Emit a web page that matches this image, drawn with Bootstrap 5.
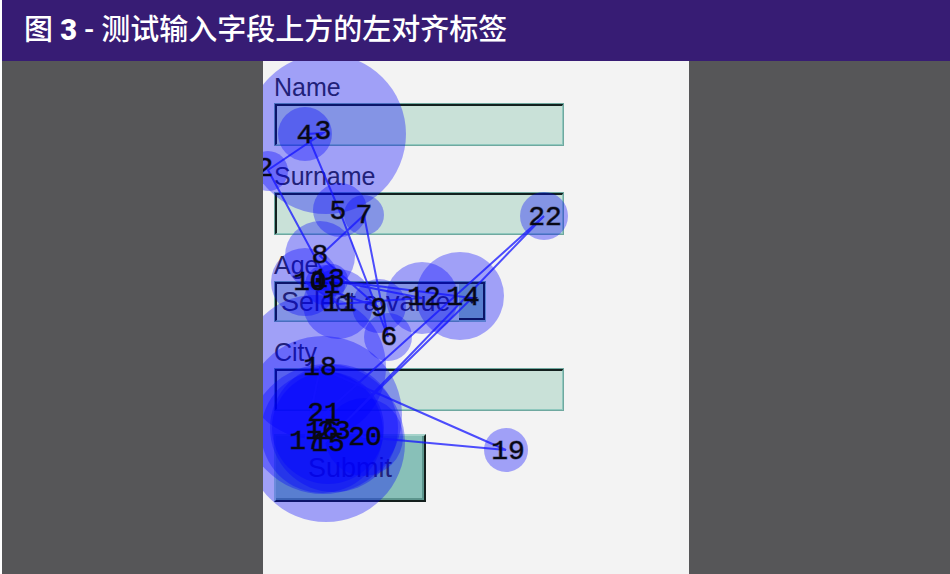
<!DOCTYPE html>
<html lang="zh-CN">
<head>
<meta charset="utf-8">
<meta name="viewport" content="width=device-width, initial-scale=1">
<title>图 3 - 测试输入字段上方的左对齐标签</title>
<link rel="stylesheet" href="https://cdn.jsdelivr.net/npm/bootstrap@5.3.0/dist/css/bootstrap.min.css">
<style>
  body { background: #fff; padding-left: 2px; }
  .figure-title { background: #371c74; color: #fff; padding: 9px 22px 10px; font: 500 29px/42px Roboto, "Noto Sans CJK SC", sans-serif; }
  .figure-title b { font-weight: 900; }
  .stage { background: #565658; }
  .sheet { width: 426px; background: #f3f3f3; padding: 12px 11px; font-family: "Liberation Sans", Arial, sans-serif; color: #333; }
  .field-label { font-size: 25px; line-height: 28px; padding-bottom: 2px; }
  .field { margin-bottom: 16px; }
  .field-box { width: 290px; height: 43px; border: 2px solid #90c8be; border-top: 3px solid #12201e; border-left: 3px solid #12201e; border-radius: 0; background: #c9e1d8; outline: 1px solid #6fa89f; outline-offset: -1px; padding: 0 6px; font-size: 25px; }
  .pick { width: 212px; height: 41px; }
  .pick select { appearance: none; border: 2px solid #90c8be; border-top: 3px solid #12201e; border-left: 3px solid #12201e; border-radius: 0; background: #c9e1d8; color: #333; padding: 0 0 0 4px; font-size: 27px; line-height: 34px; outline: 1px solid #6fa89f; outline-offset: -1px; }
  .pick svg { pointer-events: none; }
  .field-last { margin-bottom: 23px; }
  .send { width: 152px; height: 68px; border-radius: 0; border: 2px solid #141f1d; border-top-color: #a6d3cb; border-left-color: #a6d3cb; background: #88c0b8; color: #333; font-size: 27px; line-height: 30px; padding: 0; box-shadow: inset -2px -2px #5c958d; }
  .gaze { pointer-events: none; }
  .gaze circle { fill: #00f; fill-opacity: .34; }
  .gaze polyline { fill: none; stroke: #1414ff; stroke-width: 2; stroke-opacity: .75; }
  .gaze text { font: 28px "Liberation Mono", "Courier New", monospace; text-anchor: middle; fill: #080814; stroke: #080814; stroke-width: 1; stroke-opacity: .5; }
</style>
<script src="https://cdn.jsdelivr.net/npm/bootstrap@5.3.0/dist/js/bootstrap.bundle.min.js"></script>
</head>
<body class="d-flex flex-column min-vh-100">
<header><h1 class="figure-title m-0">图 <b>3</b> - 测试输入字段上方的左对齐标签</h1></header>
<main class="stage flex-grow-1 d-flex justify-content-center">
  <div class="sheet position-relative overflow-hidden">
    <form>
      <div class="field"><label class="field-label d-block" for="name">Name</label><input class="field-box d-block" id="name" type="text"></div>
      <div class="field"><label class="field-label d-block" for="surname">Surname</label><input class="field-box d-block" id="surname" type="text"></div>
      <div class="field"><label class="field-label d-block" for="age">Age</label>
        <div class="pick position-relative">
          <select id="age" class="w-100 h-100 d-block"><option>Select a value</option></select>
          <svg class="position-absolute top-0 end-0" width="27" height="41" aria-hidden="true">
            <path fill="#88c0b8" d="M0 3h27v38H0z"/><path fill="#12201e" d="M24 1h2v38H0v-2h24z"/><path fill="#12201e" d="M7 16h12l-6 7z"/>
          </svg>
        </div>
      </div>
      <div class="field-last"><label class="field-label d-block" for="city">City</label><input class="field-box d-block" id="city" type="text"></div>
      <button class="send d-block" type="button">Submit</button>
    </form>
    <svg class="gaze position-absolute top-0 start-0" width="426" height="513" viewBox="263 61 426 513" role="img" aria-label="Eye-tracking fixations">
      <circle cx="326" cy="134" r="80"/><circle cx="305" cy="134" r="27"/><circle cx="268" cy="171" r="20"/>
      <circle cx="340" cy="210" r="27"/><circle cx="364" cy="215" r="20"/><circle cx="320" cy="256" r="35"/>
      <circle cx="305" cy="282" r="34"/><circle cx="338" cy="304" r="35"/><circle cx="325" cy="285" r="20"/><circle cx="332" cy="280" r="16"/>
      <circle cx="379" cy="306" r="27"/><circle cx="388" cy="337" r="24"/><circle cx="422" cy="298" r="36"/><circle cx="460" cy="296" r="44"/>
      <circle cx="544" cy="216" r="24"/><circle cx="506" cy="450" r="22"/>
      <circle cx="326" cy="443" r="79"/><circle cx="323" cy="415" r="79"/><circle cx="314" cy="367" r="72"/>
      <circle cx="334" cy="428" r="64"/><circle cx="322" cy="432" r="61"/><circle cx="364" cy="437" r="39"/><circle cx="328" cy="428" r="56"/>
      <polyline points="330,285 268,170 323,133 307,134 340,212 388,337 364,215 320,256 378,307 305,282 338,304 422,298 330,280 472,298 325,442 322,430 305,440 320,368 506,450 364,437 323,415 544,216 336,432"/>
      <text x="265" y="176">2</text><text x="323" y="139">3</text><text x="305" y="143">4</text><text x="338" y="219">5</text>
      <text x="364" y="223">7</text><text x="320" y="263">8</text><text x="310" y="290">10</text><text x="328" y="287">13</text><text x="332" y="293">1</text><text x="318" y="290">0</text>
      <text x="339" y="311">11</text><text x="379" y="316">9</text><text x="424" y="305">12</text><text x="463" y="305">14</text><text x="389" y="345">6</text>
      <text x="320" y="375">18</text><text x="324" y="421">21</text><text x="322" y="439">16</text><text x="334" y="439">23</text><text x="328" y="451">15</text><text x="306" y="449">17</text>
      <text x="365" y="445">20</text><text x="508" y="459">19</text><text x="545" y="225">22</text>
    </svg>
  </div>
</main>
</body>
</html>
